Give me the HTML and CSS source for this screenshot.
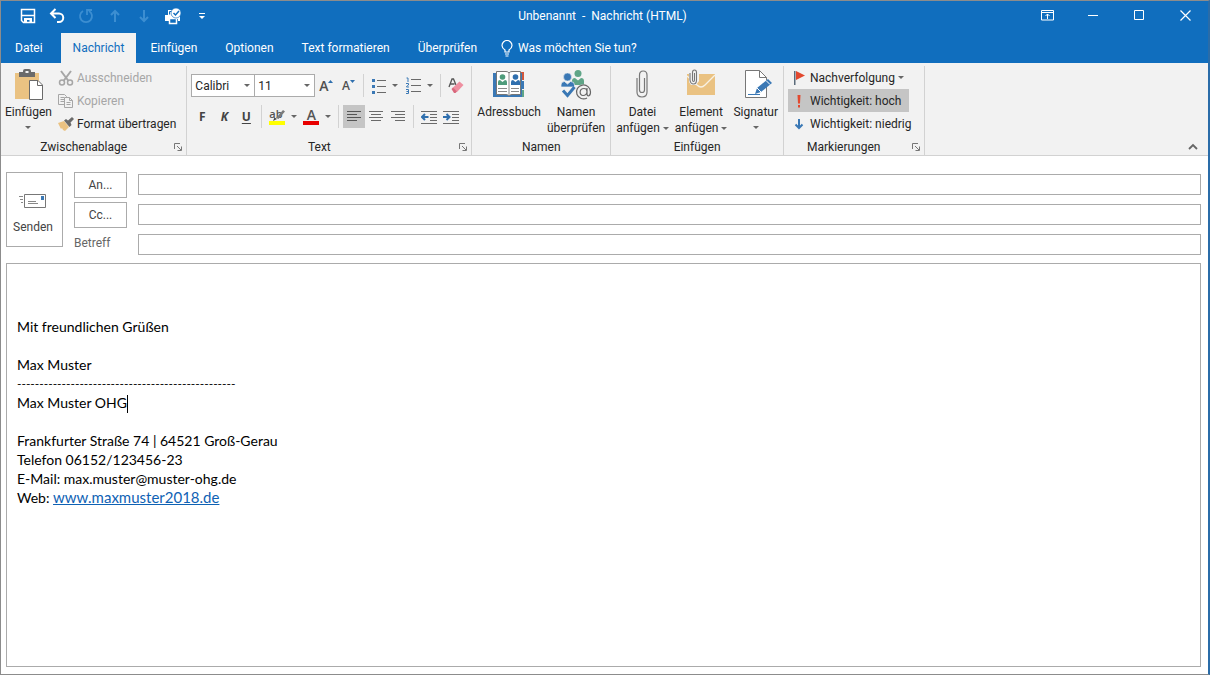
FILE: index.html
```html
<!DOCTYPE html>
<html lang="de">

<head>
    <meta charset="UTF-8">
    <meta name="viewport" content="width=device-width, initial-scale=1.0">
    <title>Unbenannt - Nachricht (HTML)</title>
    <link rel="stylesheet" href="styles.css">
</head>

<body>
<div class="window">

    <!-- Titelleiste -->
    <header class="titlebar">
        <div class="quick">
            <button class="quick-btn" aria-label="Speichern">
                <svg width="16" height="16" viewBox="0 0 16 16"><path d="M1.500 1.500h13v13h-11l-2-2z" fill="none" stroke="#fff" stroke-width="1.500"/><path d="M2 7.500h12" stroke="#fff" stroke-width="1.500"/><path d="M4 10h8v5H9.500v-3H7v3H4z" fill="#fff"/></svg>
            </button>
            <button class="quick-btn" aria-label="Rückgängig">
                <svg width="16" height="16" viewBox="0 0 16 16"><path d="M6.500 1L2 5.500 6.500 10M2.500 5.500H10a4 4 0 0 1 0 8.500H8" fill="none" stroke="#fff" stroke-width="2"/></svg>
            </button>
            <button class="quick-btn" aria-label="Wiederholen" disabled>
                <svg width="16" height="16" viewBox="0 0 16 16"><path d="M5 3a6 6 0 1 0 6 0M9 7V2h5" fill="none" stroke="#3c8ed1" stroke-width="1.800"/></svg>
            </button>
            <button class="quick-btn" aria-label="Vorheriges Element" disabled>
                <svg width="16" height="16" viewBox="0 0 16 16"><path d="M8 14V3M4 7l4-4 4 4" fill="none" stroke="#3c8ed1" stroke-width="2"/></svg>
            </button>
            <button class="quick-btn" aria-label="Nächstes Element" disabled>
                <svg width="16" height="16" viewBox="0 0 16 16"><path d="M8 2v11M4 9l4 4 4-4" fill="none" stroke="#3c8ed1" stroke-width="2"/></svg>
            </button>
            <button class="quick-btn" aria-label="Drucken">
                <svg width="18" height="18" viewBox="0 0 18 18"><path d="M1 8h3V3h5v5h7v6h-2v-2H5v2H1z" fill="#fff"/><path d="M5.500 7.500v-3H8" fill="none" stroke="#106ebe"/><path d="M5.500 11.500h7v5h-7z" fill="#106ebe" stroke="#fff" stroke-width="1.500"/><circle cx="12" cy="6" r="5" fill="#fff" stroke="#106ebe" stroke-width=".7"/><path d="M9.500 6l2 2 3.500-4" fill="none" stroke="#106ebe" stroke-width="1.500"/></svg>
            </button>
            <button class="quick-btn" aria-label="Symbolleiste anpassen">
                <svg width="8" height="8" viewBox="0 0 8 8"><path d="M1 1.500h6" stroke="#fff"/><path d="M1 4h6L4 7z" fill="#fff"/></svg>
            </button>
        </div>
        <h1 class="title">Unbenannt&nbsp; -&nbsp; Nachricht (HTML)</h1>
        <div class="controls">
            <button class="control" aria-label="Menüband-Anzeigeoptionen">
                <svg width="13" height="11" viewBox="0 0 13 11" fill="none" stroke="#fff"><path d="M.5.500h12v9.500H.5zM.5 2.500h12M6.500 9V4M4.500 6l2-2 2 2"/></svg>
            </button>
            <button class="control" aria-label="Minimieren">
                <svg width="11" height="11" viewBox="0 0 11 11"><path d="M0 5.500h10" stroke="#fff"/></svg>
            </button>
            <button class="control" aria-label="Maximieren">
                <svg width="11" height="11" viewBox="0 0 11 11"><path d="M.5.500h9v9h-9z" fill="none" stroke="#fff"/></svg>
            </button>
            <button class="control" aria-label="Schließen">
                <svg width="11" height="11" viewBox="0 0 11 11"><path d="M.5.500l10 10M10.500.500l-10 10" stroke="#fff" stroke-width="1.200"/></svg>
            </button>
        </div>
    </header>

    <!-- Registerkarten -->
    <nav class="tabs">
        <button class="tab">Datei</button>
        <button class="tab active">Nachricht</button>
        <button class="tab">Einfügen</button>
        <button class="tab">Optionen</button>
        <button class="tab">Text formatieren</button>
        <button class="tab">Überprüfen</button>
        <button class="tab tell-me">
            <svg width="12" height="17" viewBox="0 0 12 17" fill="none" stroke="#fff" stroke-width="1.200"><path d="M4 12v-2C2.500 9 1 7.500 1 5.500a5 5 0 0 1 10 0C11 7.500 9.500 9 8 10v2zM4 14h4M4.500 16h3"/></svg>
            Was möchten Sie tun?
        </button>
    </nav>

    <!-- Menüband -->
    <div class="ribbon">
        <section class="group clipboard">
            <div class="group-body">
                <button class="big">
                    <svg width="32" height="32" viewBox="0 0 32 32"><path d="M3 4h24v26H3z" fill="#eac282"/><path d="M7 8V3h4V2Q11 0 13 0h4q2 0 2 2v1h4v5z" fill="#6a6a6a"/><path d="M13.500 2h3v2h-3z" fill="#f2f2f2"/><path d="M17.500 11.500H26l4.500 4.500v14.500h-13z" fill="#fff" stroke="#6a6a6a"/><path d="M25.500 11.500V16.500h5" fill="none" stroke="#6a6a6a"/></svg>
                    <span>Einfügen</span>
                    <span class="arrow"></span>
                </button>
                <div class="list">
                    <button class="small" disabled>
                        <svg width="16" height="16" viewBox="0 0 16 16" fill="none" stroke="#a6a6a6" stroke-width="1.500"><path d="M3 1l7.500 10M13 1L5.500 11" stroke-width="2"/><circle cx="4" cy="12.500" r="2.500"/><circle cx="12" cy="12.500" r="2.500"/></svg>
                        Ausschneiden
                    </button>
                    <button class="small" disabled>
                        <svg width="16" height="16" viewBox="0 0 16 16" fill="#f2f2f2" stroke="#a6a6a6"><path d="M.5 1.500h6l2 2v8h-8zM2.500 4.500H6M2.500 6.500H6M2.500 8.500H6"/><path d="M6.500 4.500h5l3 3v7h-8zM11.500 4.500v3h3M8.500 9.500h4M8.500 11.500h4"/></svg>
                        Kopieren
                    </button>
                    <button class="small">
                        <svg width="16" height="16" viewBox="0 0 16 16"><path d="M0 7l6-2 5 6-4 4-2-1-1-2-1 1z" fill="#eac282"/><path d="M6 4.500L8 3l2 1.500L14 1l2 2-3.500 3.500L13.500 9l-2 2z" fill="#6a6a6a"/></svg>
                        Format übertragen
                    </button>
                </div>
            </div>
            <footer class="group-label"><span>Zwischenablage</span><button class="launcher" aria-label="Zwischenablage öffnen"><svg width="8" height="8" viewBox="0 0 8 8"><path d="M.5 6V.500H6M3 3l4 4M7.500 3.500v4h-4" fill="none" stroke="#777"/></svg></button></footer>
        </section>

        <section class="group text">
            <div class="group-body rows">
                <div class="row">
                    <label class="combo font-name"><select aria-label="Schriftart"><option>Calibri</option></select></label>
                    <label class="combo font-size"><select aria-label="Schriftgrad"><option>11</option></select></label>
                    <button class="tool glyph" aria-label="Schriftart vergrößern">A<svg width="5" height="14" viewBox="0 0 5 14"><path d="M0 4l2.500-3L5 4z" fill="#2f6fae"/></svg></button>
                    <button class="tool glyph shrink" aria-label="Schriftart verkleinern">A<svg width="5" height="14" viewBox="0 0 5 14"><path d="M0 1h5L2.500 4z" fill="#2f6fae"/></svg></button>
                    <i class="sep"></i>
                    <button class="tool split" aria-label="Aufzählungszeichen">
                        <svg width="14" height="16" viewBox="0 0 14 16"><path d="M0 1h3v3H0zM0 7h3v3H0zM0 13h3v3H0z" fill="#3a78b5"/><path d="M5 2.500h9M5 8.500h9M5 14.500h9" stroke="#6a6a6a"/></svg>
                        <span class="arrow"></span>
                    </button>
                    <button class="tool split" aria-label="Nummerierung">
                        <svg width="15" height="17" viewBox="0 0 15 17"><path d="M.5 1H2v4M0 6.500h2.500v1.500L.500 9.500v.5H3M0 12.500h2.500v4H0M.5 14.500h2" fill="none" stroke="#3a78b5"/><path d="M5 2.500h10M5 8.500h10M5 14.500h10" stroke="#6a6a6a"/></svg>
                        <span class="arrow"></span>
                    </button>
                    <i class="sep"></i>
                    <button class="tool" aria-label="Formatierung löschen">
                        <svg width="16" height="16" viewBox="0 0 16 16"><path d="M1 9l3-8h1.500l2.500 6M2.500 6h4" fill="none" stroke="#555" stroke-width="1.300"/><path d="M4.500 10l7-6.500L15.500 7 9 14z" fill="#ee8fa0"/><path d="M3.500 11l1.500-1.500L9 13.500l-1.500 1.500H6z" fill="#d9677c"/></svg>
                    </button>
                </div>
                <div class="row">
                    <button class="tool glyph bold" aria-label="Fett">F</button>
                    <button class="tool glyph bold italic" aria-label="Kursiv">K</button>
                    <button class="tool glyph bold underline" aria-label="Unterstrichen">U</button>
                    <i class="sep"></i>
                    <button class="tool split" aria-label="Texthervorhebungsfarbe">
                        <span class="colour highlight"><span>ab</span><svg class="pen" width="12" height="12" viewBox="0 0 12 12"><path d="M0 12l1.500-3.500L4 10z" fill="#444"/><path d="M3 9l7-8 2 1.500-6.500 7.500z" fill="#7b7b7b"/></svg></span>
                        <span class="arrow"></span>
                    </button>
                    <button class="tool split" aria-label="Schriftfarbe">
                        <span class="colour font-colour">A</span>
                        <span class="arrow"></span>
                    </button>
                    <i class="sep"></i>
                    <button class="tool pressed" aria-label="Linksbündig">
                        <svg width="14" height="12" viewBox="0 0 14 12" stroke="#555"><path d="M0 .500h14M0 3.500h10M0 6.500h14M0 9.500h10"/></svg>
                    </button>
                    <button class="tool" aria-label="Zentriert">
                        <svg width="14" height="12" viewBox="0 0 14 12" stroke="#6a6a6a"><path d="M0 .500h14M2 3.500h10M0 6.500h14M2 9.500h10"/></svg>
                    </button>
                    <button class="tool" aria-label="Rechtsbündig">
                        <svg width="14" height="12" viewBox="0 0 14 12" stroke="#6a6a6a"><path d="M0 .500h14M4 3.500h10M0 6.500h14M4 9.500h10"/></svg>
                    </button>
                    <i class="sep"></i>
                    <button class="tool" aria-label="Einzug verkleinern">
                        <svg width="16" height="14" viewBox="0 0 16 14"><path d="M0 1.500h16M9 4.500h7M9 7.500h7M9 10.500h7M0 13.500h16" stroke="#6a6a6a"/><path d="M7.500 7H1M4 4L1 7l3 3" fill="none" stroke="#2f6fae" stroke-width="2"/></svg>
                    </button>
                    <button class="tool" aria-label="Einzug vergrößern">
                        <svg width="16" height="14" viewBox="0 0 16 14"><path d="M0 1.500h16M9 4.500h7M9 7.500h7M9 10.500h7M0 13.500h16" stroke="#6a6a6a"/><path d="M0 7h6.500M3.500 4l3 3-3 3" fill="none" stroke="#2f6fae" stroke-width="2"/></svg>
                    </button>
                </div>
            </div>
            <footer class="group-label"><span>Text</span><button class="launcher" aria-label="Text öffnen"><svg width="8" height="8" viewBox="0 0 8 8"><path d="M.5 6V.500H6M3 3l4 4M7.500 3.500v4h-4" fill="none" stroke="#777"/></svg></button></footer>
        </section>

        <section class="group wide">
            <div class="group-body">
                <button class="big">
                    <svg width="32" height="32" viewBox="0 0 32 32"><path d="M28 3h3v8h-3z" fill="#d2573b"/><path d="M28 12h3v8h-3z" fill="#3a78b5"/><path d="M28 21h3v7h-3z" fill="#5fa587"/><path d="M0 4h29v24H0z" fill="#3a78b5"/><path d="M3.500 2.500H13Q15 2.500 16 4q1-1.500 3-1.500h8.500v23H19q-2 0-3 1.500-1-1.500-3-1.500H3.500z" fill="#fff" stroke="#777"/><path d="M16 4v23M5 19.500h9M5 22.500h9M18 19.500h8M18 22.500h8" stroke="#8a8a8a"/><circle cx="9.500" cy="8" r="2.800" fill="#4f9c7c"/><path d="M5 16v-3q0-2 2-2l2.500 2 2.500-2q2 0 2 2v3z" fill="#4f9c7c"/><circle cx="22.500" cy="8" r="2.800" fill="#2f6fae"/><path d="M18 16v-3q0-2 2-2l2.500 2 2.500-2q2 0 2 2v3z" fill="#2f6fae"/></svg>
                    <span>Adressbuch</span>
                </button>
                <button class="big">
                    <svg width="32" height="32" viewBox="0 0 32 32"><circle cx="18" cy="4.500" r="3.500" fill="#5fa587"/><path d="M12 16v-4q0-3 3-3l3 2.500L21 9q3 0 3 3v3l-4 1z" fill="#5fa587"/><circle cx="7.500" cy="8" r="4" fill="#3a78b5" stroke="#f2f2f2" stroke-width=".5"/><path d="M1 18v-2q0-3.500 3.500-3.500L7.500 15l3-2.500q4 0 4 3.500v2z" fill="#3a78b5" stroke="#f2f2f2" stroke-width=".7"/><path d="M3 21.500l4.500 5L14.500 18" fill="none" stroke="#3a78b5" stroke-width="3"/><circle cx="23.500" cy="23" r="7" fill="#f2f2f2"/><path d="M27 19v6q0 2 1.500 2 2-.5 2-4a7 7 0 1 0-3.500 6M27 22.500c0-2-1.500-3-3-3-5 0-5 7-1 7 2.500 0 4-2 4-4" fill="none" stroke="#666" stroke-width="1.200"/></svg>
                    <span>Namen</span>
                    <span>überprüfen</span>
                </button>
            </div>
            <footer class="group-label"><span>Namen</span></footer>
        </section>

        <section class="group wide">
            <div class="group-body">
                <button class="big">
                    <svg width="32" height="32" viewBox="0 0 32 32"><path d="M18.500 9v12q0 2.500-2.500 2.500T13.500 21V6q0-4 3.700-4T21 6v17q0 5-5 5t-5-5V9" fill="none" stroke="#777" stroke-width="1.200"/></svg>
                    <span>Datei</span>
                    <span>anfügen <span class="arrow"></span></span>
                </button>
                <button class="big">
                    <svg width="32" height="32" viewBox="0 0 32 32"><path d="M2 5h28v21H2z" fill="#eac282"/><path d="M2 7l10 9q4 4 8 0L30 6" fill="none" stroke="#f8f1e4" stroke-width="1.300"/><path d="M4 0h10v12l-3 4H6l-2-3z" fill="#f2f2f2"/><path d="M9.500 4v7q0 1.500-1 1.500T7.500 11V3.500Q7.500 1 9.500 1t2 2.500V11q0 4-3 4t-3.500-4V4" fill="none" stroke="#777" stroke-width="1.100"/></svg>
                    <span>Element</span>
                    <span>anfügen <span class="arrow"></span></span>
                </button>
                <button class="big">
                    <svg width="32" height="32" viewBox="0 0 32 32"><path d="M5.500 1.500h14l7 7v20h-21z" fill="#fff" stroke="#777"/><path d="M19.500 1.500v7h7" fill="none" stroke="#777"/><path d="M8 25.500h12" stroke="#3a78b5"/><path d="M15 25l2-6 11-9 4 4-11 9z" fill="#3a78b5"/><path d="M17 19l4 4M26 11.500l4 4" stroke="#fff"/></svg>
                    <span>Signatur</span>
                    <span class="arrow"></span>
                </button>
            </div>
            <footer class="group-label"><span>Einfügen</span></footer>
        </section>

        <section class="group marks">
            <div class="group-body">
                <div class="list">
                    <button class="small">
                        <svg width="16" height="16" viewBox="0 0 16 16"><path d="M3 1h1.500v14H3z" fill="#5b6b7a"/><path d="M5 1l9 4.500L5 10z" fill="#e2492f"/></svg>
                        Nachverfolgung<span class="arrow"></span>
                    </button>
                    <button class="small pressed">
                        <svg width="16" height="16" viewBox="0 0 16 16"><path d="M6.500 2h3L9 10.500H7zM7 12h2v2.500H7z" fill="#e2492f"/></svg>
                        Wichtigkeit: hoch
                    </button>
                    <button class="small">
                        <svg width="16" height="16" viewBox="0 0 16 16"><path d="M8 3v9M4.500 8.500L8 12l3.500-3.500" fill="none" stroke="#3a78b5" stroke-width="2"/></svg>
                        Wichtigkeit: niedrig
                    </button>
                </div>
            </div>
            <footer class="group-label"><span>Markierungen</span><button class="launcher" aria-label="Markierungen öffnen"><svg width="8" height="8" viewBox="0 0 8 8"><path d="M.5 6V.500H6M3 3l4 4M7.500 3.500v4h-4" fill="none" stroke="#777"/></svg></button></footer>
        </section>

        <button class="collapse" aria-label="Menüband reduzieren">
            <svg width="10" height="7" viewBox="0 0 10 7"><path d="M1 6l4-4 4 4" fill="none" stroke="#666" stroke-width="1.800"/></svg>
        </button>
    </div>

    <!-- Nachricht -->
    <main class="message">
        <form class="fields">
            <button type="button" class="send">
                <svg width="28" height="16" viewBox="0 0 28 16"><path d="M5.500 1.500h21v13h-21z" fill="#fff" stroke="#777"/><path d="M22 3h3v4h-3z" fill="#3a78b5"/><path d="M9 8.500h8M9 10.500h10M0 3.500h4M1 6.500h3M2 9.500h2" stroke="#888"/></svg>
                Senden
            </button>
            <button type="button" class="recipient">An...</button>
            <input type="text" aria-label="An">
            <button type="button" class="recipient">Cc...</button>
            <input type="text" aria-label="Cc">
            <label for="betreff">Betreff</label>
            <input type="text" id="betreff">
        </form>

        <article class="editor">
            <p>Mit freundlichen Grüßen</p>
            <p><br></p>
            <p>Max Muster</p>
            <p class="rule">-------------------------------------------------</p>
            <p>Max Muster OHG<span class="caret"></span></p>
            <p><br></p>
            <p>Frankfurter Straße 74 | 64521 Groß-Gerau</p>
            <p>Telefon 06152/123456-23</p>
            <p>E-Mail: max.muster@muster-ohg.de</p>
            <p>Web: <a href="#">www.maxmuster2018.de</a></p>
        </article>
    </main>

</div>
</body>
</html>
```
FILE: styles.css
```css
* {
    box-sizing: border-box;
}

body {
    margin: 0;
    font-family: Roboto, "Open Sans", sans-serif;
    font-size: 12px;
    line-height: 16px;
    color: #262626;
    background: #fff;
}

button,
input,
select {
    font: inherit;
    color: inherit;
    margin: 0;
    padding: 0;
}

button {
    border: 0;
    background: none;
    white-space: nowrap;
}

svg {
    display: block;
    flex: none;
}

.window {
    display: flex;
    flex-direction: column;
    min-height: 100vh;
    border: 1px solid #8c8c8c;
    border-right: 2px solid #2a6ca8;
}

/* Titelleiste */
.titlebar {
    display: flex;
    height: 32px;
    background: #106ebe;
    color: #fff;
}

.quick {
    display: flex;
    flex: 1;
    padding-left: 12px;
}

.quick-btn {
    display: flex;
    align-items: center;
    justify-content: center;
    width: 29px;
    height: 30px;
}

.title {
    margin: 0 16px 0 0;
    font-size: 12px;
    font-weight: normal;
    line-height: 30px;
}

.controls {
    display: flex;
    flex: 1;
    justify-content: flex-end;
}

.control {
    display: flex;
    align-items: center;
    justify-content: center;
    width: 46px;
    height: 28px;
}

/* Registerkarten */
.tabs {
    display: flex;
    height: 30px;
    background: #106ebe;
}

.tab {
    display: flex;
    align-items: center;
    gap: 5px;
    padding: 0 14px;
    color: #fff;
}

.tab.active {
    margin: 0 0 0 4px;
    padding: 0 12px;
    background: #f2f2f2;
    color: #106ebe;
}

.tab.tell-me {
    padding-left: 10px;
}

/* Menüband */
.ribbon {
    display: flex;
    padding-top: 3px;
    background: #f2f2f2;
    border-bottom: 1px solid #d2d2d2;
}

.group {
    display: flex;
    flex-direction: column;
    padding: 0 4px;
    border-right: 1px solid #d2d2d2;
}

.group.wide {
    padding: 0 5px;
}

.group-body {
    display: flex;
    height: 70px;
    gap: 6px;
}

.group-label {
    display: flex;
    align-items: center;
    height: 19px;
    padding-top: 3px;
    text-align: center;
}

.group-label span {
    flex: 1;
}

.launcher {
    padding: 4px 0 4px 12px;
}

.big {
    display: flex;
    flex-direction: column;
    align-items: center;
    padding-top: 3px;
}

.big svg {
    margin-bottom: 3px;
}

.big > .arrow {
    margin-top: 6px;
}

.arrow {
    display: inline-block;
    border: 3px solid transparent;
    border-top-color: #666;
    border-bottom: 0;
    vertical-align: middle;
}

.list {
    display: flex;
    flex-direction: column;
    align-items: flex-start;
}

.small {
    display: flex;
    align-items: center;
    gap: 3px;
    height: 23px;
    padding: 0 3px;
}

.small:disabled {
    color: #a6a6a6;
}

.clipboard .small {
    padding: 0 6px 0 0;
}

.marks .small {
    padding-right: 8px;
}

.pressed {
    background: #c5c5c5;
}

/* Gruppe Text */
.rows {
    flex-direction: column;
    gap: 8px;
    padding-top: 8px;
}

.row {
    display: flex;
    height: 23px;
}

.combo {
    position: relative;
    height: 23px;
    border: 1px solid #ababab;
    background: #fff;
}

.combo select {
    width: 100%;
    height: 100%;
    padding: 0 3px;
    border: 0;
    background: none;
    appearance: none;
}

.combo::after {
    content: "";
    position: absolute;
    top: 9px;
    right: 4px;
    border: 3px solid transparent;
    border-top-color: #666;
    border-bottom: 0;
    pointer-events: none;
}

.font-name {
    width: 64px;
}

.font-size {
    width: 61px;
    margin-left: -1px;
}

.tool {
    display: flex;
    align-items: center;
    justify-content: center;
    width: 22px;
    height: 23px;
}

.split {
    width: 34px;
    gap: 6px;
}

.sep {
    width: 1px;
    margin: 0 4px;
    background: #d2d2d2;
}

.glyph {
    font-family: "Open Sans", sans-serif;
    font-size: 14px;
    font-weight: 600;
    color: #505050;
}

.shrink {
    font-size: 12px;
}

.bold {
    font-size: 12px;
    font-weight: bold;
    color: #444;
}

.italic {
    font-style: italic;
}

.underline {
    text-decoration: underline;
    text-underline-offset: 2px;
}

.colour {
    position: relative;
    width: 16px;
    height: 16px;
    font-family: "Open Sans", sans-serif;
    line-height: 12px;
    color: #555;
}

.highlight {
    font-size: 11px;
    font-weight: 600;
    line-height: 9px;
    text-align: left;
    border-bottom: 4px solid #ff0;
}

.font-colour {
    font-size: 14px;
    font-weight: 600;
    border-bottom: 4px solid #e80000;
}

.pen {
    position: absolute;
    right: 0;
    bottom: 0;
}

.collapse {
    align-self: flex-end;
    margin-left: auto;
    padding: 5px 10px;
}

/* Kopfzeilen der Nachricht */
.message {
    display: flex;
    flex: 1;
    flex-direction: column;
    gap: 5px;
    padding: 16px 7px 7px 5px;
}

.fields {
    display: grid;
    grid-template-columns: 57px 53px 1fr;
    grid-auto-rows: 26px;
    gap: 4px 11px;
    align-items: start;
    color: #444;
}

.fields input {
    width: 100%;
    height: 21px;
    margin-top: 2px;
    padding: 0 4px;
    border: 1px solid #ababab;
}

.fields label {
    padding-top: 3px;
    color: #666;
}

.send {
    display: flex;
    flex-direction: column;
    align-items: center;
    justify-content: center;
    gap: 10px;
    grid-row: span 3;
    height: 75px;
    padding: 8px 3px 0 0;
    border: 1px solid #ababab;
}

.recipient {
    height: 26px;
    border: 1px solid #ababab;
}

/* Nachrichtentext */
.editor {
    flex: 1;
    padding: 53px 10px 10px;
    border: 1px solid #ababab;
    font-family: Lato, sans-serif;
    font-size: 14px;
    line-height: 19px;
    color: #000;
}

.editor p {
    margin: 0;
}

.editor a {
    font-size: 15px;
    color: #0f62b4;
}

.editor .rule {
    font-size: 12px;
}

.caret {
    display: inline-block;
    height: 18px;
    margin: -2px 0;
    border-left: 1px solid #000;
    vertical-align: middle;
}
```
